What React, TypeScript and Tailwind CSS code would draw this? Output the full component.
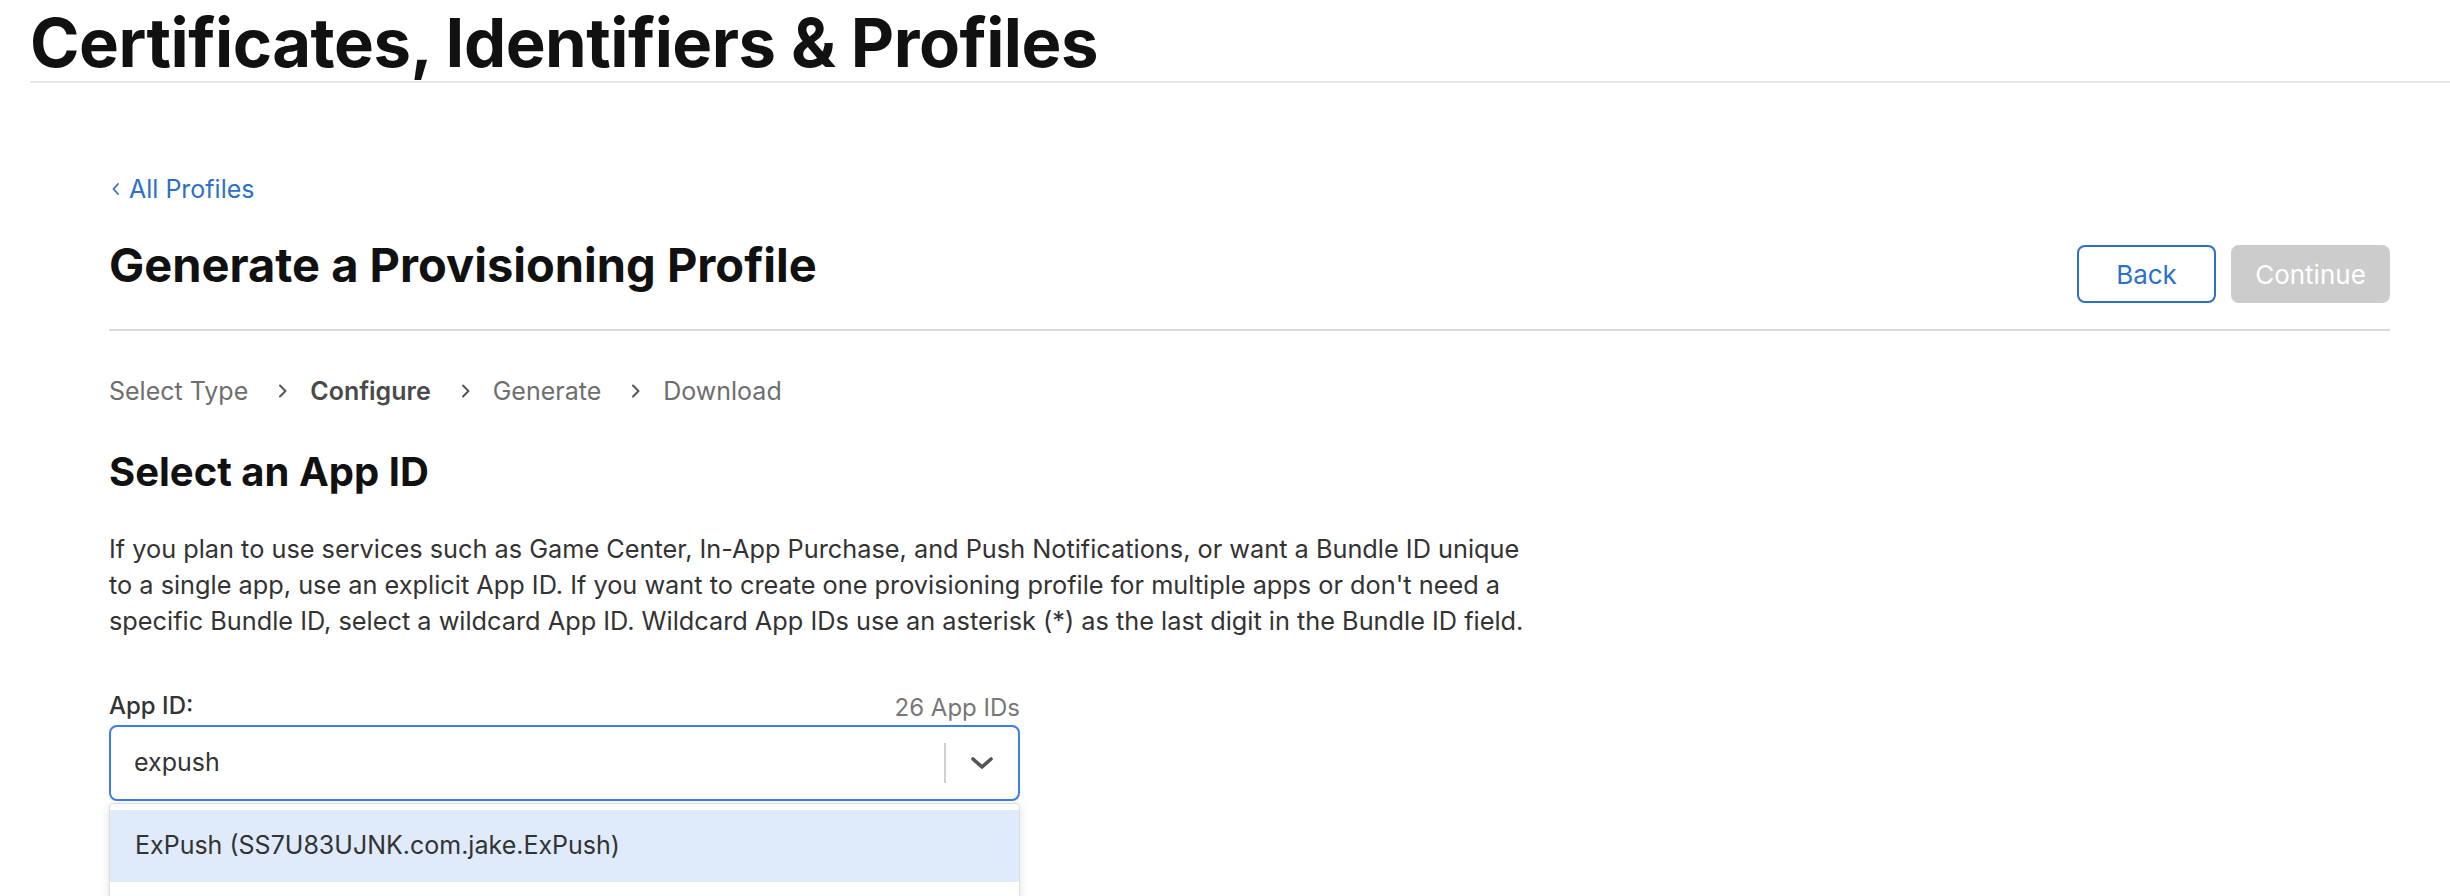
import React from "react";

function Chevron() {
  return (
    <svg width="10" height="14" viewBox="0 0 10 14" className="ml-[30px] mr-[22px] shrink-0">
      <path d="M2 1.5 L7.5 7 L2 12.5" fill="none" stroke="#555" strokeWidth="2" strokeLinecap="round" strokeLinejoin="round" />
    </svg>
  );
}

export default function App() {
  return (
    <div className="w-full h-[896px] overflow-hidden bg-white text-[#333]" style={{ fontFamily: "Inter, 'Noto Sans', 'Liberation Sans', sans-serif" }}>
      <header className="ml-[30px] border-b-2 border-[#e6e6e6]">
        <h1 className="pt-[5px] text-[67px] leading-[76px] font-bold text-[#111] tracking-[-0.5px]">Certificates, Identifiers &amp; Profiles</h1>
      </header>

      <main className="pl-[109px] pr-[60px]">
        <a className="mt-[90px] flex items-center text-[25px] leading-[32px] text-[#2d6fcc]">
          <svg width="10" height="14" viewBox="0 0 10 14" className="mr-[8px] ml-[2px]">
            <path d="M7 2 L2.5 7 L7 12" fill="none" stroke="#2d6fcc" strokeWidth="1.8" strokeLinecap="round" strokeLinejoin="round" />
          </svg>
          <span>All Profiles</span>
        </a>

        <div className="mt-[32px] flex items-start justify-between">
          <h2 className="text-[47px] leading-[56px] font-bold text-[#111]">Generate a Provisioning Profile</h2>
          <div className="mt-[8px] flex gap-[15px]">
            <button className="w-[139px] h-[58px] rounded-[8px] border-2 border-[#2d6fcc] text-[26px] text-[#2d6fcc] bg-white">Back</button>
            <button className="w-[159px] h-[58px] rounded-[8px] bg-[#cccccc] text-[26px] text-white">Continue</button>
          </div>
        </div>

        <div className="mt-[26px] h-[2px] bg-[#dadada]" />

        <nav className="mt-[44px] flex items-center text-[25px] leading-[32px] text-[#6e6e6e]">
          <span>Select Type</span>
          <Chevron />
          <span className="font-semibold text-[#4a4a4a]">Configure</span>
          <Chevron />
          <span>Generate</span>
          <Chevron />
          <span>Download</span>
        </nav>

        <h3 className="mt-[41px] text-[40px] leading-[48px] font-bold text-[#111]">Select an App ID</h3>

        <p className="mt-[35px] w-[1425px] text-[25.3px] leading-[36px] text-[#333]">
          If you plan to use services such as Game Center, In-App Purchase, and Push Notifications, or want a Bundle ID unique to a single app, use an explicit App ID. If you want to create one provisioning profile for multiple apps or don't need a specific Bundle ID, select a wildcard App ID. Wildcard App IDs use an asterisk (*) as the last digit in the Bundle ID field.
        </p>

        <div className="w-[911px]">
          <div className="mt-[48px] flex items-start justify-between">
            <label className="pt-[3px] text-[24px] leading-[32px] font-medium text-[#333]">App ID:</label>
            <span className="pt-[5px] text-[24px] leading-[32px] text-[#777]">26 App IDs</span>
          </div>

          <div className="mt-[1px] h-[76px] rounded-[8px] border-2 border-[#3b7ded] flex items-center bg-white">
            <span className="flex-1 pl-[23px] text-[25px] text-[#333]">expush</span>
            <div className="w-[2px] h-[40px] bg-[#cfcfcf]" />
            <div className="w-[72px] flex items-center justify-center">
              <svg width="24" height="14" viewBox="0 0 24 14">
                <path d="M3 3 L12 11 L21 3" fill="none" stroke="#555" strokeWidth="3.6" strokeLinecap="round" strokeLinejoin="round" />
              </svg>
            </div>
          </div>

          <div className="mt-[2px] border border-[#dedede] rounded-t-[4px] bg-white pt-[6px] shadow-[0_2px_10px_rgba(0,0,0,0.12)]">
            <div className="h-[72px] bg-[#dfeafb] flex items-center pl-[25px] text-[25px] text-[#333]">ExPush (SS7U83UJNK.com.jake.ExPush)</div>
            <div className="h-[72px] bg-white" />
          </div>
        </div>
      </main>
    </div>
  );
}
